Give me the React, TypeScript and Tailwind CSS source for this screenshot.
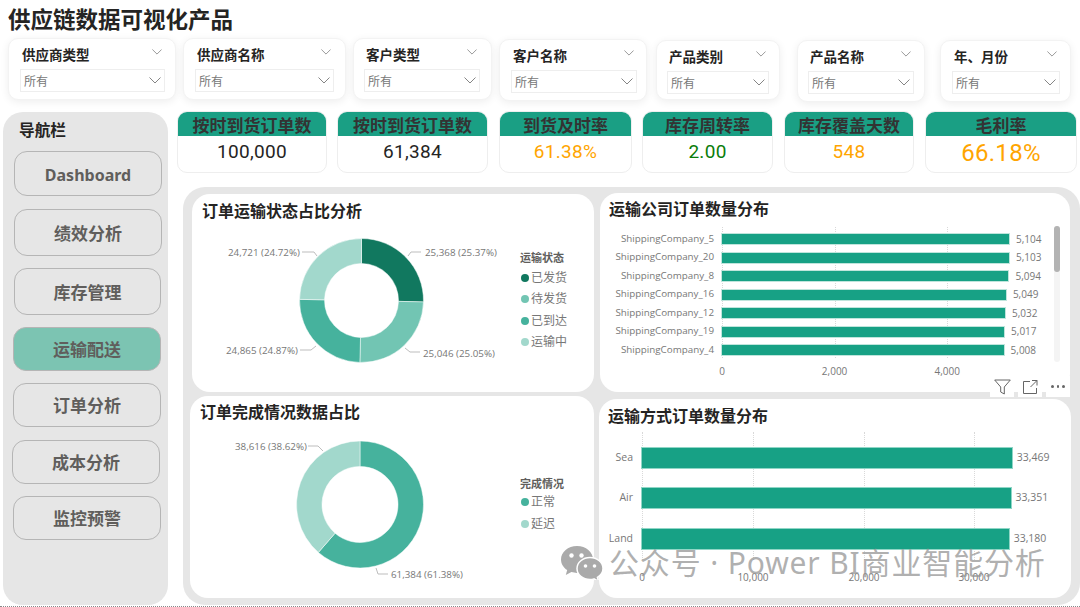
const SANS = "font-['Noto_Sans','Noto_Sans_CJK_SC',sans-serif]"
const CHART = "font-['Open_Sans','Noto_Sans_CJK_SC',sans-serif]"

// 顶部筛选器
const filters = [
  { name: "供应商类型", card: "w-[168px] h-[62px] ml-[8px] mt-0 pl-[11px] pr-[10px]" },
  { name: "供应商名称", card: "w-[163px] h-[62px] ml-[7px] mt-0 pl-[11px] pr-[11px]" },
  { name: "客户类型", card: "w-[139px] h-[62px] ml-[7px] mt-0 pl-[10px] pr-[11px]" },
  { name: "客户名称", card: "w-[148px] h-[62px] ml-[7px] mt-[1px] pl-[11px] pr-[9px]" },
  { name: "产品类别", card: "w-[124px] h-[60px] ml-[9px] mt-[2px] pl-[10px] pr-[10px]" },
  { name: "产品名称", card: "w-[128px] h-[62px] ml-[17px] mt-[2px] pl-[10px] pr-[10px]" },
  { name: "年、月份", card: "w-[131px] h-[62px] ml-[15px] mt-[2px] pl-[11px] pr-[10px]" },
]

const kpis = [
  { title: "按时到货订单数", value: "100,000", box: "w-[150px] ml-0", text: "text-[#252423] text-[19px]" },
  { title: "按时到货订单数", value: "61,384", box: "w-[151px] ml-[10px]", text: "text-[#252423] text-[19px]" },
  { title: "到货及时率", value: "61.38%", box: "w-[133px] ml-[11px]", text: "text-[#ffa500] text-[19px]" },
  { title: "库存周转率", value: "2.00", box: "w-[131px] ml-[10px]", text: "text-[#0a7d0a] text-[19px]" },
  { title: "库存覆盖天数", value: "548", box: "w-[130px] ml-[11px]", text: "text-[#ffa500] text-[19px]" },
  { title: "毛利率", value: "66.18%", box: "w-[152px] ml-[11px]", text: "text-[#ffa500] text-[24px]" },
]

const navItems = [
  { label: "Dashboard", cls: "w-[148px] h-[45px] ml-[11px] mt-[10px] bg-[#e6e6e6] text-[16px]" },
  { label: "绩效分析", cls: "w-[148px] h-[47px] ml-[11px] mt-[13px] bg-[#e6e6e6] text-[17px]" },
  { label: "库存管理", cls: "w-[147px] h-[47px] ml-[11px] mt-[12px] bg-[#e6e6e6] text-[17px]" },
  { label: "运输配送", cls: "w-[148px] h-[44px] ml-[10px] mt-[12px] bg-[#7cc4b2] text-[17px]" },
  { label: "订单分析", cls: "w-[148px] h-[44px] ml-[10px] mt-[12px] bg-[#e6e6e6] text-[17px]" },
  { label: "成本分析", cls: "w-[148px] h-[44px] ml-[9px] mt-[13px] bg-[#e6e6e6] text-[17px]" },
  { label: "监控预警", cls: "w-[148px] h-[44px] ml-[10px] mt-[12px] bg-[#e6e6e6] text-[17px]" },
]

const companies = [
  { name: "ShippingCompany_5", value: 5104 },
  { name: "ShippingCompany_20", value: 5103 },
  { name: "ShippingCompany_8", value: 5094 },
  { name: "ShippingCompany_16", value: 5049 },
  { name: "ShippingCompany_12", value: 5032 },
  { name: "ShippingCompany_19", value: 5017 },
  { name: "ShippingCompany_4", value: 5008 },
]

const modes = [
  { name: "Sea", value: 33469 },
  { name: "Air", value: 33351 },
  { name: "Land", value: 33180 },
]

function arc(cx: number, cy: number, r: number, ir: number, from: number, to: number) {
  const p = (rad: number, a: number) => {
    const t = (a / 100) * Math.PI * 2
    return `${(cx + rad * Math.sin(t)).toFixed(2)} ${(cy - rad * Math.cos(t)).toFixed(2)}`
  }
  const large = to - from > 50 ? 1 : 0
  return `M${p(r, from)} A${r} ${r} 0 ${large} 1 ${p(r, to)} L${p(ir, to)} A${ir} ${ir} 0 ${large} 0 ${p(ir, from)} Z`
}

type Slice = { pct: number; color: string }
type Label = { x: number; y: number; text: string; line: string }

function Donut({ cx, cy, r, ir, slices, labels, viewBox, cls }: {
  cx: number; cy: number; r: number; ir: number; slices: Slice[]; labels: Label[]; viewBox: string; cls: string
}) {
  let at = 0
  return (
    <svg viewBox={viewBox} className={cls}>
      {slices.map((s) => {
        const d = arc(cx, cy, r, ir, at, at + s.pct)
        at += s.pct
        return <path key={s.color} d={d} fill={s.color} stroke="#fff" strokeWidth="0.5" />
      })}
      {labels.map((l) => (
        <g key={l.text}>
          <polyline points={l.line} fill="none" stroke="#bdbdbd" strokeWidth="1" />
          <text x={l.x} y={l.y} dy="3.5" fontSize="9.8" fill="#777">{l.text}</text>
        </g>
      ))}
    </svg>
  )
}

function Legend({ title, items, cls, rowCls }: {
  title: string; items: { name: string; color: string }[]; cls: string; rowCls: string
}) {
  return (
    <div className={cls}>
      <div className="text-[11px] leading-[14px] font-bold text-[#605e5c]">{title}</div>
      <div className="flex flex-col">
        {items.map((i) => (
          <div key={i.name} className={`flex items-center pl-[1px] text-[12px] text-[#777] ${rowCls}`}>
            <span className="w-[8px] h-[8px] rounded-full mr-[2px]" style={{ background: i.color }} />
            {i.name}
          </div>
        ))}
      </div>
    </div>
  )
}

function CardTitle({ text, cls }: { text: string; cls: string }) {
  return <div className={`text-[16px] font-bold text-[#252423] ${cls}`}>{text}</div>
}

function Chevron({ cls }: { cls: string }) {
  return (
    <svg viewBox="0 0 12 7" className={cls} fill="none" stroke="#777" strokeWidth="0.9">
      <path d="M.5.5L6 6l5.500-5.500" />
    </svg>
  )
}

function WeChatMark() {
  return (
    <svg viewBox="0 0 42 34" className="w-[42px] h-[34px] mr-[6px]">
      <path d="M16 0C7 0 0 6 0 13.5c0 4.400 2.500 8.200 6.200 10.600L4.800 29l5.600-2.900c1.800.5 3.600.8 5.600.8 9 0 16-6 16-13.400S25 0 16 0z" fill="#aaa" />
      <circle cx="10.500" cy="9.500" r="2.200" fill="#fff" />
      <circle cx="20.500" cy="9.500" r="2.200" fill="#fff" />
      <path d="M29 11.500c-7.200 0-13 4.900-13 11s5.800 11 13 11c1.400 0 2.800-.2 4-.6l4.600 2.400-1.200-3.900c3.400-2 5.600-5.300 5.600-8.900 0-6.100-5.800-11-13-11z" fill="#aaa" stroke="#fff" strokeWidth="1.500" />
      <circle cx="24.500" cy="20" r="1.800" fill="#fff" />
      <circle cx="33.500" cy="20" r="1.800" fill="#fff" />
    </svg>
  )
}

export default function App() {
  return (
    <div className={`relative w-[1080px] h-[607px] overflow-hidden bg-white border-b border-dotted border-b-[#888] ${SANS}`}>
      {/* 标题 */}
      <div className="h-[38px] pl-[8px] pt-[4px] text-[22.5px] leading-[32px] font-bold text-[#252423]">
        供应链数据可视化产品
      </div>

      {/* 筛选器 */}
      <div className="flex items-start h-[73px]">
        {filters.map((f) => (
          <div key={f.name} className={`shrink-0 bg-white rounded-[10px] border border-[#f3f3f3] shadow-[0_2px_8px_rgba(0,0,0,0.07)] ${f.card}`}>
            <div className="flex items-center justify-between h-[30px] pl-[2px] pr-[3px] pt-[3px]">
              <span className="text-[13.5px] font-bold text-[#252423] whitespace-nowrap">{f.name}</span>
              <Chevron cls="w-[10px] h-[6px] -mt-[7px]" />
            </div>
            <div className="flex items-center justify-between h-[23px] border border-[#eeeeee] pl-[3px] pr-[3px]">
              <span className="text-[12px] text-[#777] pt-[2px]">所有</span>
              <Chevron cls="w-[12px] h-[7px]" />
            </div>
          </div>
        ))}
      </div>

      <div className="flex items-start">
        {/* 导航栏 */}
        <div className="w-[165px] h-[493px] ml-[3px] mt-[1px] bg-[#e6e6e6] rounded-[20px] shrink-0 pt-[7px]">
          <div className="pl-[16px] text-[15.7px] leading-[22px] font-bold text-[#252423]">导航栏</div>
          {navItems.map((n) => (
            <div key={n.label} className={`flex items-center justify-center border border-[#b5b5b5] rounded-[13px] pt-[2px] text-[#605e5c] font-bold ${n.cls}`}>
              {n.label}
            </div>
          ))}
        </div>

        <div className="ml-[9px] flex-1 min-w-0">
          {/* 指标卡 */}
          <div className="flex h-[62px]">
            {kpis.map((k) => (
              <div key={k.value} className={`shrink-0 bg-white rounded-[10px] border border-[#eeeeee] overflow-hidden ${k.box}`}>
                <div className="h-[24px] bg-[#1a9f84] flex items-center justify-center pt-[4px] text-[17px] font-bold text-[#333]">
                  {k.title}
                </div>
                <div className={`h-[33px] flex items-center justify-center font-['Roboto',sans-serif] tracking-[0.3px] ${k.text}`}>
                  {k.value}
                </div>
              </div>
            ))}
          </div>

          {/* 图表区 */}
          <div className={`flex items-start w-[897px] h-[418px] ml-[6px] mt-[14px] pl-[7px] bg-[#e6e6e6] rounded-[22px] ${CHART}`}>
            <div className="w-[409px] shrink-0 font-['Noto_Sans','Noto_Sans_CJK_SC',sans-serif]">
              <div className="w-[402px] h-[198px] ml-[2px] mt-[7px] bg-white rounded-[18px]">
                <CardTitle text="订单运输状态占比分析" cls="h-[32px] pl-[10px] pt-[5px]" />
                <div className="flex items-start">
                  <Donut
                    cx={361.5} cy={300.5} r={62} ir={37}
                    viewBox="192 226 326 166"
                    cls={`w-[326px] h-[166px] shrink-0 ${CHART}`}
                    slices={[
                      { pct: 25.37, color: "#11785f" },
                      { pct: 25.05, color: "#72c5b3" },
                      { pct: 24.87, color: "#46b29d" },
                      { pct: 24.71, color: "#a2d8cc" },
                    ]}
                    labels={[
                      { x: 425, y: 252, text: "25,368 (25.37%)", line: "408,256 411,252 421,252" },
                      { x: 423, y: 353, text: "25,046 (25.05%)", line: "405,348 410,352 420,352" },
                      { x: 226, y: 350, text: "24,865 (24.87%)", line: "300,350 311,350 316,346" },
                      { x: 228, y: 252, text: "24,721 (24.72%)", line: "302,252 314,252 317,256" },
                    ]}
                  />
                  <Legend
                    title="运输状态"
                    cls="ml-[2px] mt-[25px]"
                    rowCls="h-[21.5px] first:mt-[2px]"
                    items={[
                      { name: "已发货", color: "#11785f" },
                      { name: "待发货", color: "#72c5b3" },
                      { name: "已到达", color: "#46b29d" },
                      { name: "运输中", color: "#a2d8cc" },
                    ]}
                  />
                </div>
              </div>
              <div className="w-[404px] h-[202px] mt-[4px] bg-white rounded-[18px]">
                <CardTitle text="订单完成情况数据占比" cls="h-[32px] pl-[10px] pt-[4px]" />
                <div className="flex items-start">
                  <Donut
                    cx={360} cy={504.5} r={63.5} ir={38}
                    viewBox="190 428 328 170"
                    cls={`w-[328px] h-[170px] shrink-0 ${CHART}`}
                    slices={[
                      { pct: 61.38, color: "#46b29d" },
                      { pct: 38.62, color: "#a2d8cc" },
                    ]}
                    labels={[
                      { x: 235, y: 446, text: "38,616 (38.62%)", line: "308,446 318,446 323,451" },
                      { x: 391, y: 574, text: "61,384 (61.38%)", line: "376,568 378,574 388,574" },
                    ]}
                  />
                  <Legend
                    title="完成情况"
                    cls="ml-[2px] mt-[49px]"
                    rowCls="h-[22px]"
                    items={[
                      { name: "正常", color: "#46b29d" },
                      { name: "延迟", color: "#a2d8cc" },
                    ]}
                  />
                </div>
              </div>
            </div>

            <div className="shrink-0">
              <div className="relative w-[470px] h-[199px] ml-[1px] mt-[6px] bg-white rounded-[18px]">
                <div className={SANS}>
                  <CardTitle text="运输公司订单数量分布" cls="h-[34px] pl-[9px] pt-[4px]" />
                </div>
                <div className="relative w-[340px] ml-[122px] h-[131px] pt-[3px]">
                  {[0, 112.6, 225.2].map((x) => (
                    <div key={x} className="absolute top-0 h-[131px] border-l border-dotted border-l-[#d9d9d9]" style={{ left: x }} />
                  ))}
                  {companies.map((c) => (
                    <div key={c.name} className="relative flex items-center h-[18.5px]">
                      <span className="absolute right-full mr-[8px] text-[9.8px] text-[#777] whitespace-nowrap">{c.name}</span>
                      <div className="relative h-[10px] shrink-0 bg-[#17a185] outline outline-[#bfe5dc]" style={{ width: c.value * 0.05623 }} />
                      <span className="ml-[7px] text-[10px] text-[#777]">{c.value.toLocaleString("en-US")}</span>
                    </div>
                  ))}
                  <div className="absolute top-[137px] left-0 w-[300px] h-[20px] text-[10px] text-[#777]">
                    <span className="absolute -translate-x-1/2" style={{ left: 0 }}>0</span>
                    <span className="absolute -translate-x-1/2" style={{ left: 112.6 }}>2,000</span>
                    <span className="absolute -translate-x-1/2" style={{ left: 225.2 }}>4,000</span>
                  </div>
                </div>
                {/* 滚动条 */}
                <div className="absolute top-[33px] left-[454px] w-[6px] h-[136px] bg-[#f4f4f4] rounded-[3px]">
                  <div className="w-[6px] h-[46px] bg-[#b3b3b3] rounded-[3px]" />
                </div>
              </div>
              <div className="w-[472px] h-[199px] mt-[7px] bg-white rounded-[18px]">
                <div className={SANS}>
                  <CardTitle text="运输方式订单数量分布" cls="h-[33px] pl-[9px] pt-[5px]" />
                </div>
                <div className="relative w-[425px] ml-[43px] h-[128px] pt-[5.5px]">
                  {[0, 111, 222, 332].map((x) => (
                    <div key={x} className="absolute top-0 h-[128px] border-l border-dotted border-l-[#d9d9d9]" style={{ left: x }} />
                  ))}
                  {modes.map((m) => (
                    <div key={m.name} className="relative flex items-center h-[40.500px]">
                      <span className="absolute right-full mr-[9px] text-[10.5px] text-[#777]">{m.name}</span>
                      <div className="relative h-[20px] shrink-0 bg-[#17a185] outline outline-[#8fd6c6]" style={{ width: m.value * 0.01105 }} />
                      <span className="ml-[5px] text-[10.5px] text-[#777]">{m.value.toLocaleString("en-US")}</span>
                    </div>
                  ))}
                  <div className="absolute top-[138px] left-0 w-[340px] text-[10px] text-[#777]">
                    <span className="absolute -translate-x-1/2" style={{ left: 0 }}>0</span>
                    <span className="absolute -translate-x-1/2" style={{ left: 111 }}>10,000</span>
                    <span className="absolute -translate-x-1/2" style={{ left: 222 }}>20,000</span>
                    <span className="absolute -translate-x-1/2" style={{ left: 332 }}>30,000</span>
                  </div>
                </div>
              </div>
            </div>
          </div>
        </div>
      </div>

      {/* 视觉对象工具栏 */}
      <div className="absolute left-[990px] top-[376px] flex gap-[4px] h-[21px]">
        <div className="w-[24px] h-[21px] bg-white flex items-center justify-center">
          <svg viewBox="0 0 17 16" className="w-[17px] h-[16px]" fill="none" stroke="#666" strokeWidth="1">
            <path d="M.7 1h15.600l-6 7v7l-3.600-2V8z" />
          </svg>
        </div>
        <div className="w-[24px] h-[21px] bg-white flex items-center justify-center">
          <svg viewBox="0 0 15 14" className="w-[15px] h-[14px]" fill="none" stroke="#666" strokeWidth="1">
            <path d="M7 1.500H.5v12h13V8M9 .5h5v5M14 .5L7.500 7" />
          </svg>
        </div>
        <div className="w-[24px] h-[21px] bg-white flex items-center justify-center gap-[3px]">
          <span className="w-[2.500px] h-[2.500px] rounded-full bg-[#666]" />
          <span className="w-[2.500px] h-[2.500px] rounded-full bg-[#666]" />
          <span className="w-[2.500px] h-[2.500px] rounded-full bg-[#666]" />
        </div>
      </div>

      {/* 水印 */}
      <div className="absolute left-[561px] top-[545px] flex items-center h-[36px] pointer-events-none">
        <WeChatMark />
        <span className="text-[30px] leading-[36px] text-[rgba(150,150,150,0.75)] tracking-[0.85px] whitespace-nowrap">
          公众号 · Power BI商业智能分析
        </span>
      </div>
    </div>
  )
}
